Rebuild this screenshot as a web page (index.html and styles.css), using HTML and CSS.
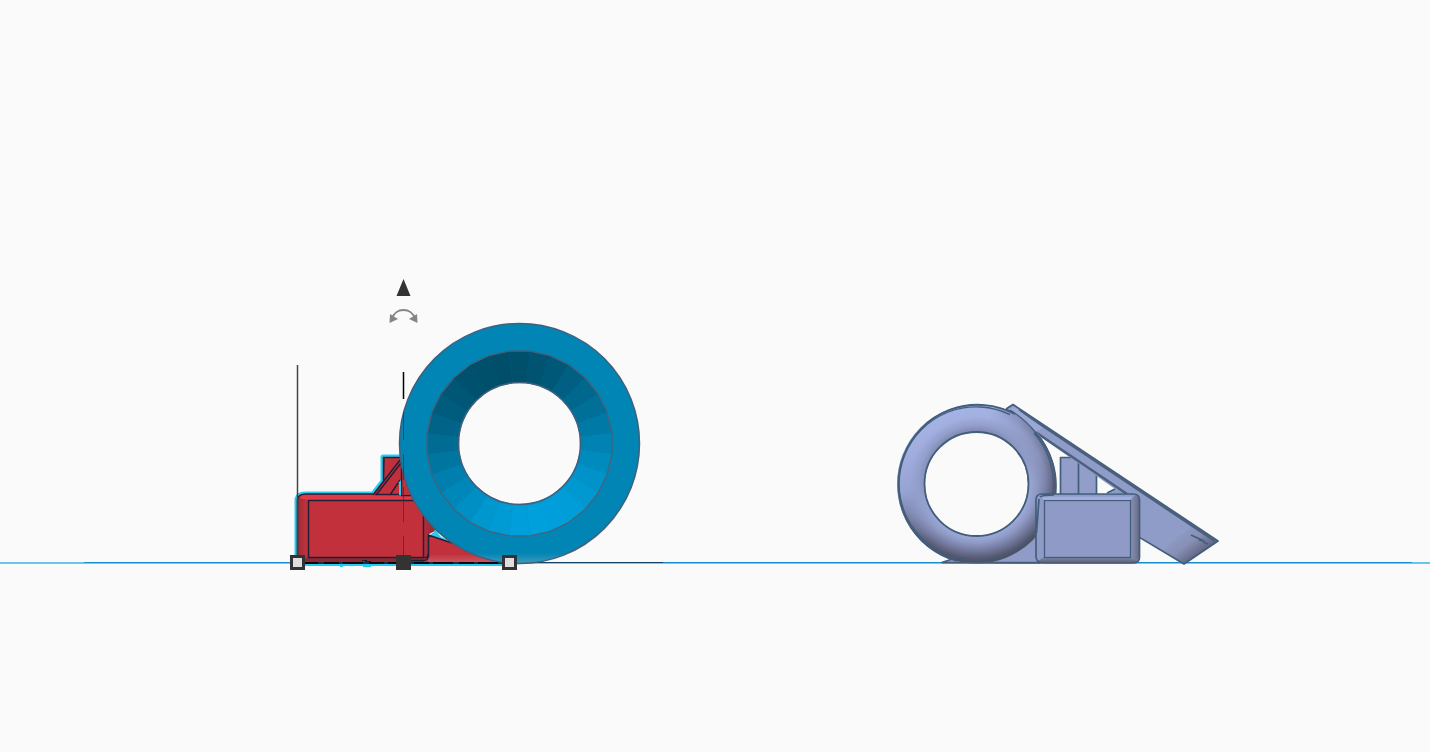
FILE: index.html
```html
<!DOCTYPE html>
<html lang="en">
<head>
<meta charset="utf-8">
<meta name="viewport" content="width=device-width, initial-scale=1">
<title>Workplane</title>
<link rel="stylesheet" href="styles.css">
</head>
<body>
<main class="viewport">
<svg class="scene" viewBox="0 0 1430 752" role="img" aria-label="3D models on a workplane, front view">
  <defs>
    <linearGradient id="redSide"><stop offset="0" stop-color="#9c2c35"/><stop offset="1" stop-color="#c4323d"/></linearGradient>
    <linearGradient id="redEnd"><stop offset="0" stop-color="#b82d38"/><stop offset="1" stop-color="#842630"/></linearGradient>
    <linearGradient id="redRamp" x1="0" y1="0" x2="0" y2="1"><stop offset=".7" stop-color="#c1303b"/><stop offset="1" stop-color="#c95660"/></linearGradient>
    <linearGradient id="wheelFoot" gradientUnits="userSpaceOnUse" x1="0" y1="553" x2="0" y2="563"><stop offset="0" stop-color="#0085b5"/><stop offset="1" stop-color="#3c9abc"/></linearGradient>
    <radialGradient id="tubeTop" gradientUnits="userSpaceOnUse" cx="976.5" cy="484" r="80">
      <stop offset=".64" stop-color="#767d9f"/><stop offset=".73" stop-color="#929dcb"/><stop offset=".84" stop-color="#a4b1e2"/><stop offset="1" stop-color="#a6b4e6"/>
    </radialGradient>
    <radialGradient id="tubeBottom" gradientUnits="userSpaceOnUse" cx="976.5" cy="482" r="80">
      <stop offset=".65" stop-color="#a3b1e0"/><stop offset=".76" stop-color="#8f9ac5"/><stop offset=".87" stop-color="#70769a"/><stop offset=".98" stop-color="#505164"/>
    </radialGradient>
    <radialGradient id="tubeRight" gradientUnits="userSpaceOnUse" cx="976.5" cy="484" r="80">
      <stop offset=".68" stop-color="#929dc8"/><stop offset=".86" stop-color="#838bb0"/><stop offset="1" stop-color="#5d6181"/>
    </radialGradient>
    <linearGradient id="fadeDown" gradientUnits="userSpaceOnUse" x1="960" y1="405" x2="980" y2="495"><stop offset="0" stop-color="#fff"/><stop offset=".35" stop-color="#ccc"/><stop offset="1" stop-color="#000"/></linearGradient>
    <linearGradient id="fadeUp" gradientUnits="userSpaceOnUse" x1="968" y1="475" x2="988" y2="550"><stop offset="0" stop-color="#000"/><stop offset=".7" stop-color="#eee"/><stop offset="1" stop-color="#fff"/></linearGradient>
    <linearGradient id="fadeLeft" gradientUnits="userSpaceOnUse" x1="990" y1="0" x2="1055" y2="0"><stop offset="0" stop-color="#000"/><stop offset="1" stop-color="#fff"/></linearGradient>
    <mask id="maskTop" maskUnits="userSpaceOnUse" x="890" y="400" width="170" height="170"><rect x="890" y="400" width="170" height="170" fill="url(#fadeDown)"/></mask>
    <mask id="maskBottom" maskUnits="userSpaceOnUse" x="890" y="400" width="170" height="170"><rect x="890" y="400" width="170" height="170" fill="url(#fadeUp)"/></mask>
    <mask id="maskRight" maskUnits="userSpaceOnUse" x="890" y="400" width="170" height="170"><rect x="890" y="400" width="170" height="170" fill="url(#fadeLeft)"/></mask>
    <linearGradient id="slabEnd" gradientUnits="userSpaceOnUse" x1="1174" y1="535" x2="1193" y2="560"><stop offset="0" stop-color="#8f9bc6"/><stop offset=".5" stop-color="#878fb4"/><stop offset="1" stop-color="#5f637f"/></linearGradient>
    <linearGradient id="boxTop" x1="0" y1="0" x2="0" y2="1"><stop offset="0" stop-color="#8390bd"/><stop offset="1" stop-color="#b0bff2"/></linearGradient>
    <linearGradient id="boxBottom" x1="0" y1="0" x2="0" y2="1"><stop offset="0" stop-color="#858caf"/><stop offset="1" stop-color="#5c5c6d"/></linearGradient>
    <linearGradient id="boxRight"><stop offset="0" stop-color="#878eb1"/><stop offset="1" stop-color="#686d87"/></linearGradient>
  </defs>

  <g class="ground">
    <path class="ground-far" d="M0 563H84M1412 563H1430"/>
    <path class="ground-soft" d="M84 563.5H1412"/>
    <path class="ground-near" d="M84 562.5H1412"/>
    <path class="ground-shadow" d="M500 562.5H663"/>
  </g>

  <g class="selected">
    <path class="halo" d="M297 562V499Q298 494 305 494H373L383 481V457H410V562Z"/>
    <path fill="#c1303b" d="M297 562V499Q298 494 305 494H373L383 481V457H425V530H428V562Z"/>
    <path fill="url(#redSide)" d="M297 562V500Q299 494 308 494V562Z"/>
    <path fill="#e13a47" d="M299 498Q301 494 307 494H418V500H308Z"/>
    <path fill="#8e2832" d="M308 557H424V562H300Z"/>
    <path fill="url(#redEnd)" d="M424 505L437 520V530L429 534V560H424Z"/>
    <path fill="#28ccf0" d="M430 535L434 532L435 529L456 544L450 543Z"/>
    <path fill="#fafafa" d="M437 532L448 540L441 537Z"/>
    <path fill="url(#redRamp)" d="M428.500 535L453 543L520 562H428Z"/>
    <path class="red-line" d="M297.500 562V500Q298 494 306 494H373M383.500 481V457.500H402M383.500 480L384 457M401.500 461V495M373 495L400 460M376 495L401 463M390 495L400 480M375 494.500H400M401 495.500H415M308 500.500H414M308.500 500V557.500H423.500V513M428.500 557V535L455 544M308 557.500H426Q428 557 428.500 553M410 560.500H424Q428 560 428.500 556"/>
    <path fill="#28ccf0" d="M398 483L401 480V495H399V483Z"/>
    <path class="base-line" d="M298 563H515"/>
    <path class="base-dash" d="M298 563H515"/>
    <path class="base-glow" d="M305 565H504M340 566H343M363 566H371"/>
    <path class="base-detail" d="M362 560.500H367M365 561.500H371"/>
  </g>

  <g class="wheel">
    <path fill="url(#wheelFoot)" fill-rule="evenodd" d="M399.500 443.500a120 120 0 1 0 240 0a120 120 0 1 0-240 0M458.500 443.500a61 61 0 1 1 122 0a61 61 0 1 1-122 0"/>
    <g id="facets"></g>
    <circle class="wheel-line" cx="519.500" cy="443.500" r="120"/>
    <circle class="wheel-line" cx="519.500" cy="443.500" r="61"/>
  </g>

  <path class="guide-left" d="M297.500 365V555"/>
  <path class="guide-center" d="M403.500 372V399"/>
  <path class="guide-hidden" d="M403.500 412V440M403.500 454V480M403.500 487V522M403.500 536V556"/>
  <g class="controls">
    <path fill="#333" d="M403.500 279L410.500 296H396.500Z"/>
    <path class="rotate-arc" d="M392 319C395 307 412 307 415 319"/>
    <path fill="#858585" d="M390 314L389.500 323L398 319ZM417 314L417.500 323L409 319Z"/>
    <rect class="handle" x="291.500" y="556.500" width="12" height="12"/>
    <rect fill="#333" x="396" y="555" width="15" height="15"/>
    <rect class="handle" x="503.500" y="556.500" width="12" height="12"/>
  </g>

  <g class="model">
    <path class="violet-line" fill="#909cc7" d="M942 562.500L958 557H1000Q1025 550 1040 528V563Z"/>
    <path class="violet-line" fill="#929dca" d="M1060.500 494V457.500H1078L1096.500 475V494M1078.500 457V494"/>
    <path fill="#909cc8" d="M1006 409L1013 404.500L1218 541L1184 564L1139 536V503L1126.500 494L1107 493L1115 489L1035 433Z"/>
    <path fill="url(#slabEnd)" d="M1163 550L1193 525L1207 534L1218 541L1184 564Z"/>
    <path class="violet-line" fill="none" d="M1006 409L1013 404.500L1218 541L1184 564L1139 537M1107 493L1115 489"/>
    <path class="slab-edge" d="M1019 410L1215 541M1034 431L1127 494"/>
    <path class="violet-line" fill="none" d="M1191 535L1204 541L1199 540M1203 542L1208 544"/>
    <g>
      <circle class="tube" cx="976.500" cy="484" r="65.500" stroke="#939fcd"/>
      <circle class="tube" cx="976.500" cy="484" r="65.500" stroke="url(#tubeTop)" mask="url(#maskTop)"/>
      <circle class="tube" cx="976.500" cy="484" r="65.500" stroke="url(#tubeRight)" mask="url(#maskRight)"/>
      <circle class="tube" cx="976.500" cy="484" r="65.500" stroke="url(#tubeBottom)" mask="url(#maskBottom)"/>
      <circle class="ring-line" cx="976.500" cy="484" r="52"/>
      <path class="ring-line" d="M957 561A79.500 79.500 0 1 1 1015 414M1035 432A79.500 79.500 0 0 1 1055.500 494"/>
      <path class="ring-thin" d="M953 557.300A77 77 0 1 1 1010 414.700M1034 433A78 78 0 0 1 1053 494M953 557.300Q981 563 1002 556Q1024 548 1038 528"/>
      <path fill="#9ba8d5" d="M1008 409L1014 407L1043 428L1035 432Q1025 420 1012 412Z"/>
      <path class="ring-thin" d="M1010 410Q1026 420 1036 433M1006 409L1015 414"/>
    </g>
    <path fill="#8f9bc6" d="M1042 494H1133Q1139.500 494 1139.500 500V557Q1139.500 563.500 1133 563.500H1043Q1036 563 1036 556V500Q1036 494 1042 494Z"/>
    <path fill="url(#boxTop)" d="M1040 494H1135L1130 500H1044Z"/>
    <path fill="url(#boxRight)" d="M1131 500L1135 495Q1139 496 1139 500V557L1136 562L1131 557Z"/>
    <path fill="url(#boxBottom)" d="M1044 557H1131L1137 562L1133 563H1043L1038 561Z"/>
    <path class="violet-line" fill="none" d="M1042 494H1133Q1139.500 494 1139.500 500V557Q1139.500 563 1133 563H1043Q1036 563 1036 556V500Q1036 494 1042 494ZM1040 497Q1042 495 1054 495M1036.500 533L1039 499"/>
    <rect class="ring-thin" x="1044.500" y="500.500" width="86" height="57"/>
    <path class="violet-line" fill="none" d="M942 562.500H1040"/>
  </g>
</svg>
</main>
<script src="scene.js"></script>
</body>
</html>
```
FILE: styles.css
```css
html, body { margin: 0; min-height: 100%; background: #fafafa; }
.viewport { width: 100%; overflow: hidden; }
.scene { display: block; width: 100%; height: auto; }
.ground path { fill: none; stroke-width: 1; }
.ground .ground-far { stroke: #69c5ed; stroke-width: 2; }
.ground .ground-near { stroke: #168dd0; }
.ground .ground-soft { stroke: #7bc8ed; stroke-width: 1; }
.ground .ground-shadow { stroke: #124467; }
.halo { fill: #28ccf0; stroke: #28ccf0; stroke-width: 5; stroke-linejoin: round; }
.red-line { fill: none; stroke: #202038; stroke-width: 1.5; }
.base-line { stroke: #173044; stroke-width: 2; }
.base-dash { stroke: #05080d; stroke-width: 2; stroke-dasharray: 20 6 15 4; }
.base-glow { stroke: #23cbf0; stroke-width: 2; }
.base-detail { stroke: #2c1721; }
.wheel-line { fill: none; stroke: #41607d; stroke-width: 1.5; }
.facet-edge { fill: none; stroke: #48617a; stroke-width: 1.3; }
.guide-left { stroke: #444; stroke-width: 1.5; }
.guide-center { stroke: #000; stroke-width: 1.5; }
.guide-hidden { stroke: #172f48; opacity: .6; }
.rotate-arc { fill: none; stroke: #858585; stroke-width: 2; }
.handle { fill: #dedede; stroke: #333; stroke-width: 3; }
.violet-line { stroke: #425e7b; stroke-width: 1.7; stroke-linejoin: round; }
.slab-edge { fill: none; stroke: #4b607d; stroke-width: 2.5; }
.tube { fill: none; stroke-width: 28; }
.ring-line { fill: none; stroke: #425e7b; stroke-width: 1.8; }
.ring-thin { fill: none; stroke: #425e7b; stroke-width: 1.3; }
```
FILE: scene.js
```js
const svgNS = "http://www.w3.org/2000/svg";
const group = document.getElementById("facets");
const center = { x: 519.5, y: 443.5 };
const count = 28;
const step = Math.PI * 2 / count;

function point(angle, radius) {
  return `${(center.x + Math.sin(angle) * radius).toFixed(2)},${(center.y - Math.cos(angle) * radius).toFixed(2)}`;
}

const rim = [];
for (let i = 0; i < count; i++) {
  const start = (i - 0.5) * step;
  const end = start + step;
  const light = Math.cos(i * step - 164 * Math.PI / 180);
  const facet = document.createElementNS(svgNS, "polygon");
  const color = `rgb(0, ${Math.round(119 + light * 41)}, ${Math.round(163 + light * 57)})`;
  facet.setAttribute("points", [point(start, 93), point(end, 93), point(end, 61), point(start, 61)].join(" "));
  facet.setAttribute("fill", color);
  facet.setAttribute("stroke", color);
  facet.setAttribute("stroke-width", "0.4");
  group.appendChild(facet);
  rim.push(point(start, 93));
}

const edge = document.createElementNS(svgNS, "polygon");
edge.setAttribute("points", rim.join(" "));
edge.setAttribute("class", "facet-edge");
group.appendChild(edge);
```
